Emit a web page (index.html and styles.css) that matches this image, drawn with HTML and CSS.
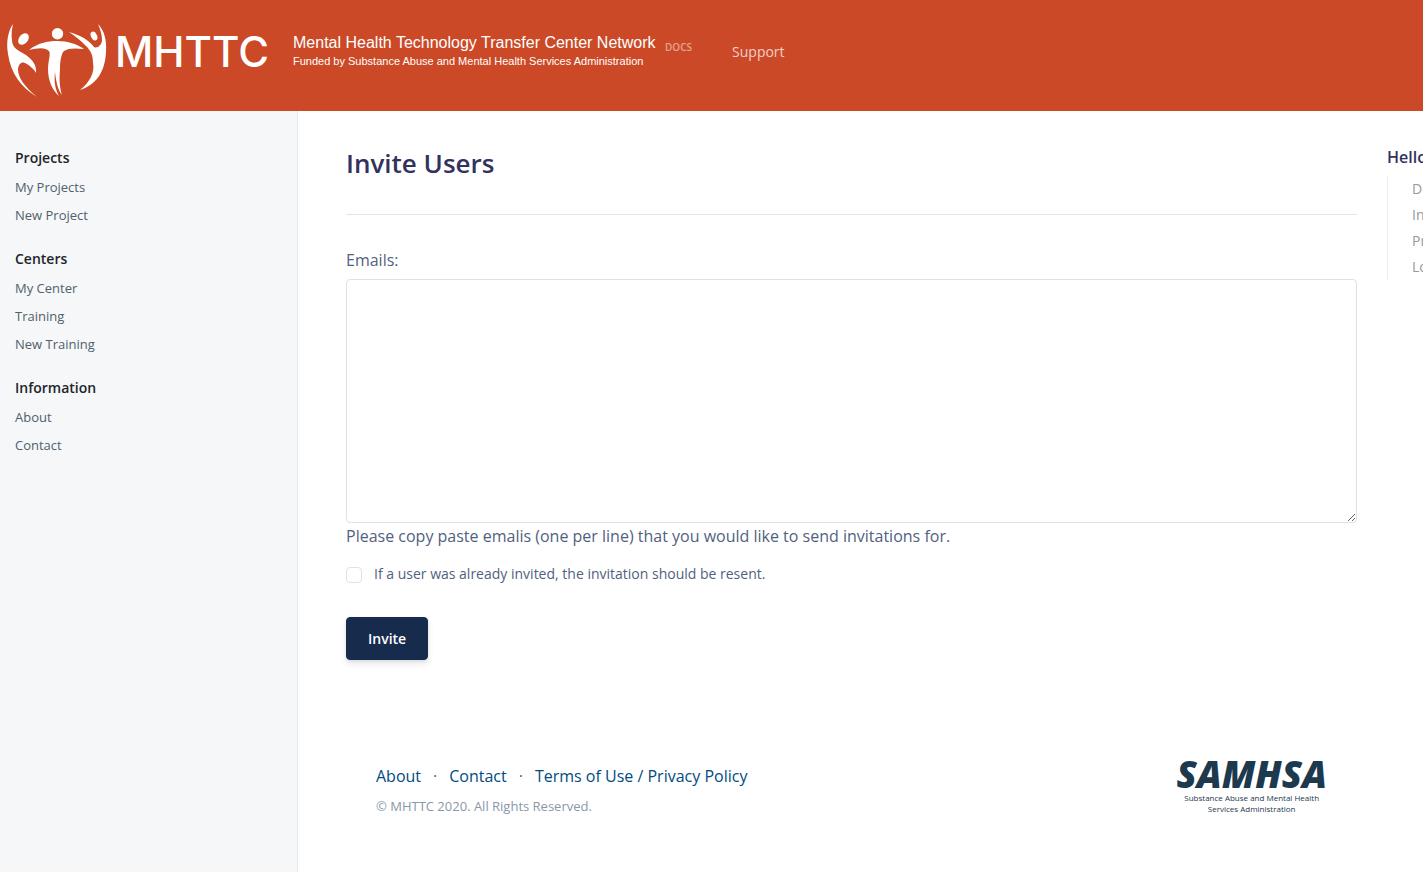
FILE: index.html
```
<!DOCTYPE html>
<html lang="en">
<head>
<meta charset="utf-8">
<title>Invite Users</title>
<link rel="stylesheet" href="styles.css">
</head>
<body>
<header class="navbar">
  <a class="brand" href="#">
    <svg class="brand-mark" viewBox="0 0 112 80" fill="#fff" aria-hidden="true">
      <path d="M13 4C8 11 6 22 8 34C11 54 21 67 37 77C25 67 18 58 18 49C19 42 23 41 27 44C31 47 34 49 36 53C37 46 33 40 26 35C18 30 12 28 12 20C11 14 12 9 13 4Z"/>
      <ellipse cx="23.500" cy="19" rx="4.500" ry="6.500" transform="rotate(38 23.500 19)"/>
      <circle cx="57.500" cy="13.700" r="5.700"/>
      <path d="M29 30C38 23 47 21 57 21C68 21 77 24 84 29C75 28 68 28 64 31C61 34 60 42 60 50C59 61 60 69 62 75C58 70 56 62 55 52C54 61 55 69 59 76C52 70 48 60 48 49C48 41 51 34 49 31C45 27 38 28 29 30Z"/>
      <ellipse cx="94" cy="16" rx="3" ry="4.700" transform="rotate(-25 94 16)"/>
      <path d="M69 12C80 15 89 20 94 27C97 29 102 25 102 20C102 14 100 9 98 4C104 10 107 20 106 32C105 52 96 65 80 70C90 62 95 52 93 43C93 35 91 31 86 26C80 20 75 16 69 12Z"/>
    </svg>
    <span class="brand-name">MHTTC</span>
    <span class="brand-text">
      <span class="brand-title">Mental Health Technology Transfer Center Network</span>
      <span class="brand-sub">Funded by Substance Abuse and Mental Health Services Administration</span>
    </span>
    <span class="brand-tag">DOCS</span>
  </a>
  <nav><a class="nav-link" href="#">Support</a></nav>
</header>
<div class="layout">
  <nav class="sidebar">
    <section class="group">
      <h2 class="group-title">Projects</h2>
      <a class="side-link" href="#">My Projects</a>
      <a class="side-link" href="#">New Project</a>
    </section>
    <section class="group">
      <h2 class="group-title">Centers</h2>
      <a class="side-link" href="#">My Center</a>
      <a class="side-link" href="#">Training</a>
      <a class="side-link" href="#">New Training</a>
    </section>
    <section class="group">
      <h2 class="group-title">Information</h2>
      <a class="side-link" href="#">About</a>
      <a class="side-link" href="#">Contact</a>
    </section>
  </nav>
  <main class="content">
    <h1 class="title">Invite Users</h1>
    <form>
      <label class="field-label" for="emails">Emails:</label>
      <textarea class="emails" id="emails" rows="10"></textarea>
      <p class="help">Please copy paste emalis (one per line) that you would like to send invitations for.</p>
      <div class="check-row">
        <input class="check" type="checkbox" id="resend">
        <label for="resend">If a user was already invited, the invitation should be resent.</label>
      </div>
      <button class="btn" type="submit">Invite</button>
    </form>
    <footer class="footer">
      <div>
        <div class="footer-links">
          <a href="#">About</a><span>·</span><a href="#">Contact</a><span>·</span><a href="#">Terms of Use / Privacy Policy</a>
        </div>
        <p class="copyright">© MHTTC 2020. All Rights Reserved.</p>
      </div>
      <a class="samhsa" href="#">
        <span class="samhsa-name">SAMHSA</span>
        <span class="samhsa-sub">Substance Abuse and Mental Health<br>Services Administration</span>
      </a>
    </footer>
  </main>
  <aside class="toc">
    <h2 class="toc-title">Hello</h2>
    <div class="toc-list">
      <a href="#">Details</a>
      <a href="#">Invite</a>
      <a href="#">Profile</a>
      <a href="#">Logout</a>
    </div>
  </aside>
</div>
</body>
</html>
```
FILE: styles.css
```
* { box-sizing: border-box; }
body {
  margin: 0;
  min-height: 100vh;
  display: flex;
  flex-direction: column;
  font-family: "Open Sans", sans-serif;
  font-size: 16px;
  line-height: 24px;
  color: #525f7f;
  background: #fff;
}
a { color: inherit; text-decoration: none; }
h1, h2, p { margin: 0; }

.navbar {
  display: flex;
  align-items: flex-start;
  gap: 40px;
  padding: 20px 0 11px;
  background: #cb4926;
  color: #fff;
  white-space: nowrap;
}
.brand { display: flex; align-items: flex-start; }
.brand-mark { width: 112px; height: 80px; }
.brand-name {
  width: 181px;
  padding-left: 3px;
  font-family: Inter, sans-serif;
  font-size: 42px;
  font-weight: 500;
  line-height: 64px;
}
.brand-text {
  display: flex;
  flex-direction: column;
  width: 372px;
  padding-top: 13px;
  font-family: "Liberation Sans", sans-serif;
}
.brand-title { font-size: 16px; line-height: 20px; }
.brand-sub { font-size: 11px; line-height: 16px; }
.brand-tag {
  padding-top: 15px;
  font-size: 10px;
  font-weight: 600;
  color: rgba(255, 255, 255, .5);
}
.nav-link {
  display: block;
  padding-top: 20px;
  font-size: 14px;
  color: rgba(255, 255, 255, .75);
}

.layout { display: flex; flex: 1; overflow-x: hidden; }
.sidebar {
  flex: 0 0 298px;
  padding: 32px 15px;
  background: #f5f7f9;
  border-right: 1px solid #e6e8eb;
}
.group { margin-bottom: 15px; }
.group-title {
  padding: 3px 0 4px;
  font-size: 14px;
  line-height: 23px;
  font-weight: 600;
  color: #212529;
}
.side-link {
  display: block;
  font-size: 13px;
  line-height: 28px;
  color: #525f6b;
}

.content {
  flex: 1;
  min-width: 0;
  padding: 35px 30px 52px 48px;
}
.title {
  padding-bottom: 34px;
  margin-bottom: 33px;
  border-bottom: 1px solid #e2e3e6;
  font-size: 26px;
  line-height: 34px;
  font-weight: 600;
  color: #32325d;
}
.field-label { display: block; margin-bottom: 7px; }
.emails {
  display: block;
  width: 100%;
  height: 244px;
  padding: 10px 12px;
  border: 1px solid #dee2e6;
  border-radius: 4px;
  background: #fff;
  font: inherit;
  color: inherit;
  resize: vertical;
}
.help { padding-top: 1px; }
.check-row {
  display: flex;
  align-items: center;
  gap: 12px;
  margin: 14px 0 31px;
  font-size: 14px;
}
.check {
  appearance: none;
  width: 16px;
  height: 16px;
  margin: 2px 0 0;
  border: 1px solid #dee2e6;
  border-radius: 4px;
  background: #fff;
}
.btn {
  display: block;
  padding: 9px 21px;
  border: 1px solid #172b4d;
  border-radius: 4px;
  background: #172b4d;
  color: #fff;
  font: 600 14px/23px "Open Sans", sans-serif;
  box-shadow: 0 4px 6px rgba(50, 50, 93, .11), 0 1px 3px rgba(0, 0, 0, .08);
}
.footer {
  display: flex;
  justify-content: space-between;
  padding: 96px 30px 0;
}
.footer-links {
  display: flex;
  gap: 12px;
  padding-top: 8px;
  color: #525f7f;
}
.footer-links a { color: #004b83; }
.copyright {
  padding-top: 6px;
  font-size: 13px;
  color: #8898aa;
}
.samhsa {
  display: flex;
  flex-direction: column;
  align-items: center;
  color: #1c394e;
}
.samhsa-name {
  font-size: 37px;
  line-height: 36px;
  font-weight: 800;
  font-style: italic;
}
.samhsa-sub {
  font-family: "Open Sans", sans-serif;
  font-size: 8px;
  line-height: 11px;
  text-align: center;
}

.toc {
  flex: 0 0 187px;
  margin-right: -151px;
  padding-top: 34px;
}
.toc-title {
  font-size: 16px;
  font-weight: 600;
  color: #32325d;
}
.toc-list {
  display: flex;
  flex-direction: column;
  margin-top: 7px;
  padding-left: 24px;
  border-left: 1px solid #eceef0;
  font-size: 14px;
  line-height: 26px;
  color: #99979c;
}
```
